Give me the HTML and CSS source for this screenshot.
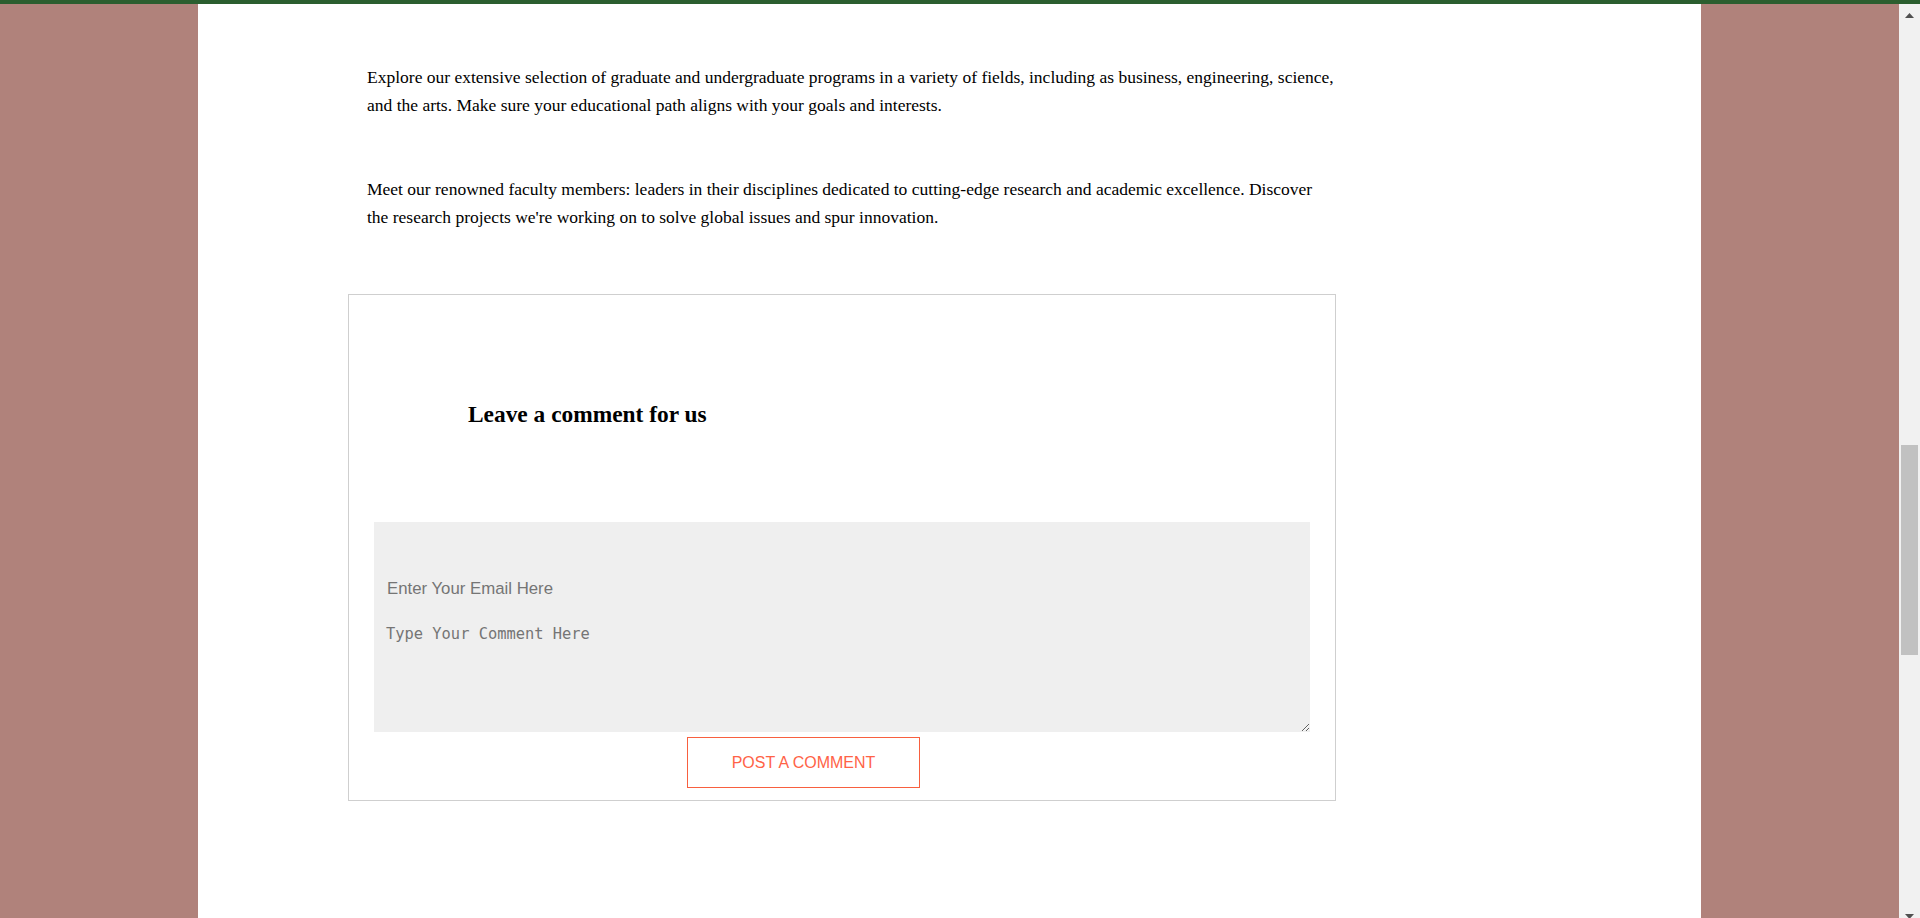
FILE: index.html
```html
<!DOCTYPE html>
<html lang="en">
<head>
<meta charset="utf-8">
<title>Programs and Research</title>
<link rel="stylesheet" href="styles.css">
</head>
<body>
<div class="page">
  <div class="topbar"></div>
  <div class="main">
    <div class="side"></div>
    <div class="content">
      <div class="column">
        <p class="lead">Explore our extensive selection of graduate and undergraduate programs in a variety of fields, including as business, engineering, science, and the arts. Make sure your educational path aligns with your goals and interests.</p>
        <p class="lead lead-second">Meet our renowned faculty members: leaders in their disciplines dedicated to cutting-edge research and academic excellence. Discover the research projects we're working on to solve global issues and spur innovation.</p>
        <div class="comment-box">
          <h3 class="comment-title">Leave a comment for us</h3>
          <form class="comment-form">
            <input class="email-input" type="email" placeholder="Enter Your Email Here">
            <textarea class="comment-input" placeholder="Type Your Comment Here"></textarea>
          </form>
          <button class="post-btn" type="button">POST A COMMENT</button>
        </div>
      </div>
    </div>
    <div class="side"></div>
    <div class="scrollbar">
      <svg class="arrow arrow-up" width="9" height="5" viewBox="0 0 9 5"><polygon points="4.5,0 9,5 0,5" fill="#505050"/></svg>
      <div class="thumb"></div>
      <svg class="arrow arrow-down" width="9" height="5" viewBox="0 0 9 5"><polygon points="0,0 9,0 4.5,5" fill="#505050"/></svg>
    </div>
  </div>
</div>
</body>
</html>
```

FILE: styles.css
```css
html, body {
  margin: 0;
  padding: 0;
  height: 918px;
  overflow: hidden;
}

body {
  font-family: "Liberation Serif", "Times New Roman", serif;
  color: #000;
  background: #fff;
}

.page {
  height: 918px;
  display: flex;
  flex-direction: column;
}

.topbar {
  height: 4px;
  background: #2b5e2f;
  flex: none;
}

.main {
  flex: 1;
  display: flex;
  min-height: 0;
}

.side {
  width: 198px;
  flex: none;
  background: #b0827b;
}

.content {
  flex: 1;
  background: #fff;
  overflow: hidden;
}

.column {
  margin-left: 150px;
  width: 989px;
  padding-top: 60px;
}

.lead {
  margin: 0;
  padding-left: 19px;
  font-size: 17.5px;
  line-height: 27.5px;
}

.lead-second {
  margin-top: 57px;
}

.comment-box {
  margin-top: 63px;
  width: 988px;
  box-sizing: border-box;
  border: 1px solid #cfcfcf;
  padding-bottom: 12px;
}

.comment-title {
  margin: 105px 0 0 119px;
  font-family: "Liberation Serif", "Times New Roman", serif;
  font-weight: 700;
  font-size: 23.4px;
  line-height: 28px;
}

.comment-form {
  margin: 94px 25px 0 25px;
  background: #efefef;
}

.email-input {
  display: block;
  width: 100%;
  height: 88px;
  box-sizing: border-box;
  margin: 0;
  border: 0;
  padding: 46px 12px 0 13px;
  background: #efefef;
  font-family: "Liberation Sans", Arial, sans-serif;
  font-size: 16.8px;
  color: #333;
  outline: none;
}

.comment-input {
  display: block;
  width: 100%;
  height: 122px;
  box-sizing: border-box;
  margin: 0;
  border: 0;
  padding: 15px 12px 0 12px;
  background: #efefef;
  font-family: "DejaVu Sans Mono", "Liberation Mono", monospace;
  font-size: 15.4px;
  line-height: normal;
  color: #333;
  outline: none;
}

.email-input::placeholder,
.comment-input::placeholder {
  color: #757575;
  opacity: 1;
}

.post-btn {
  display: block;
  margin: 5px 0 0 338px;
  width: 233px;
  height: 51px;
  box-sizing: border-box;
  border: 1px solid #f8603f;
  background: #fff;
  color: #ff6347;
  font-family: "Liberation Sans", Arial, sans-serif;
  font-size: 16px;
  padding: 0;
}

.scrollbar {
  width: 21px;
  flex: none;
  background: #f1f1f1;
  display: flex;
  flex-direction: column;
  align-items: center;
  overflow: hidden;
}

.arrow {
  display: block;
  flex: none;
}

.arrow-up {
  margin-top: 9px;
}

.thumb {
  margin-top: 427px;
  width: 17px;
  height: 210px;
  background: #c1c1c1;
  flex: none;
}

.arrow-down {
  margin-top: auto;
  margin-bottom: -1px;
}
```
